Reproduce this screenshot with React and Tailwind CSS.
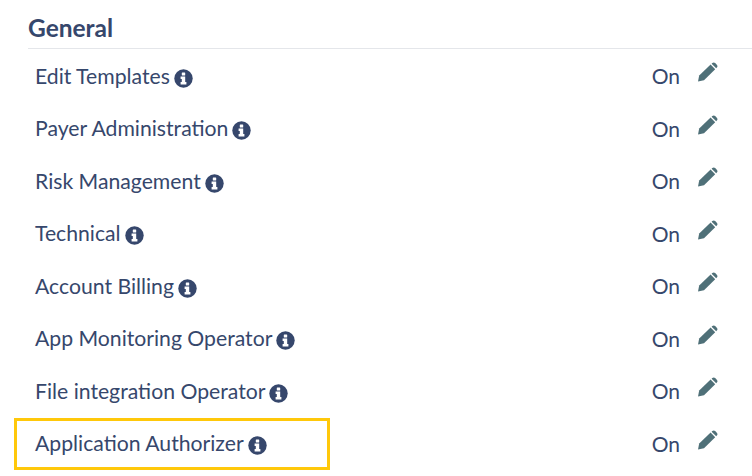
import React from 'react';

const rows = [
  'Edit Templates',
  'Payer Administration',
  'Risk Management',
  'Technical',
  'Account Billing',
  'App Monitoring Operator',
  'File integration Operator',
  'Application Authorizer',
];

const InfoIcon = () => (
  <svg viewBox="0 0 19 19" className="ml-[4px] mt-[5px] h-[19px] w-[19px] shrink-0">
    <circle cx="9.5" cy="9.5" r="9.2" fill="#36476c" />
    <rect x="7.8" y="3.4" width="3.4" height="3" rx="0.5" fill="#fff" />
    <path d="M6.6 7.6h4.6v5.4h1.2v2.4H6.6V13h1.2v-3H6.6z" fill="#fff" />
  </svg>
);

const PencilIcon = () => (
  <svg viewBox="0 0 22 21" className="ml-[17px] mr-[33px] mb-[8px] h-[21px] w-[22px] shrink-0">
    <path d="M1 20.5l1.2-6L13.6 3.6l4.6 4.6L7 19.2z" fill="#4f7078" />
    <path d="M15.3 2.1c.9-.9 2-.9 2.9 0l1.6 1.6c.9.9.9 2 0 2.9l-.6.6-4.6-4.5z" fill="#4f7078" />
  </svg>
);

// One permission row
const Row = ({ label }) => (
  <div className="flex h-[52.5px] items-center pl-[7px]">
    <span className="mt-[1px] text-[21.2px] leading-none">{label}</span>
    <InfoIcon />
    <span className="ml-auto text-[21px] leading-none">On</span>
    <PencilIcon />
  </div>
);

export default function App() {
  return (
    <div className="relative h-[476px] w-[752px] overflow-hidden bg-white pl-[28px] text-[#36476c] [font-family:Lato,sans-serif]">
      <div className="flex h-[49px] items-end border-b border-[#e4e6ea] pb-[8px]">
        <h2 className="text-[24.5px] font-bold leading-none">General</h2>
      </div>
      <div className="pt-[0.5px]">
        {rows.map((label) => (
          <Row key={label} label={label} />
        ))}
      </div>
      {/* highlight box over the last row */}
      <div className="absolute left-[14px] top-[418px] h-[52px] w-[316px] border-[3px] border-[#ffc80a]" />
    </div>
  );
}
